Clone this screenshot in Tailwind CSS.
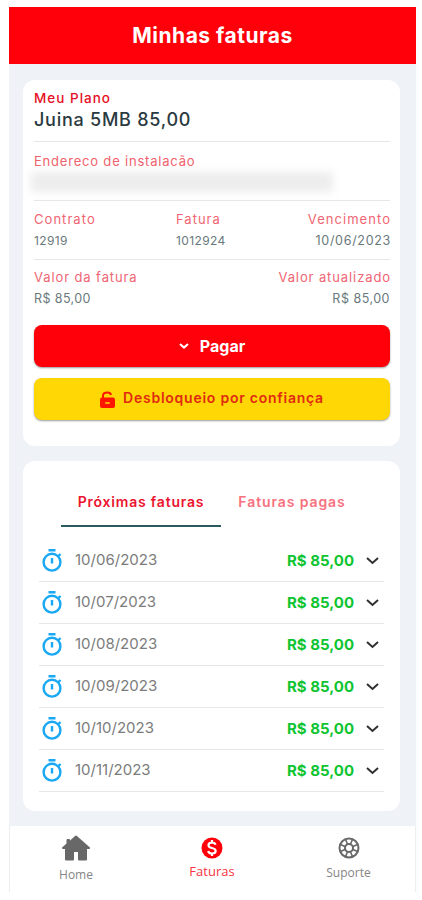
<!DOCTYPE html>
<html lang="pt-BR">
<head>
    <meta charset="UTF-8">
    <meta name="viewport" content="width=device-width, initial-scale=1.0">
    <title>Minhas faturas</title>
    <script src="https://cdn.jsdelivr.net/npm/@tailwindcss/browser@4"></script>
</head>
<body class="bg-white font-['Inter',sans-serif]">
    <div class="ml-[9px] w-[407px] pt-[7px]">
        <header class="h-[57px] bg-[#ff000a] flex items-center justify-center">
            <h1 class="text-[21px] leading-[28px] font-bold text-white tracking-[0.5px]">Minhas faturas</h1>
        </header>

        <main class="h-[762px] bg-[#eff2f7] pt-4 pl-[14px] pr-4">
            <!-- Plano atual -->
            <section class="h-[366px] bg-white rounded-xl pt-2 pl-[11px] pr-[10px]">
                <div class="h-[54px] border-b border-gray-200">
                    <p class="text-[13.5px] leading-5 font-medium text-[#e60f25] tracking-[1px]">Meu Plano</p>
                    <p class="text-[18px] leading-[24px] font-medium text-[#2b3a40] tracking-[0.75px]">Juina 5MB 85,00</p>
                </div>
                <div class="h-[59px] pt-2 border-b border-gray-200">
                    <p class="text-[13px] leading-[22px] text-[#f0606b] tracking-[0.8px]">Endereco de instalacão</p>
                    <div class="w-[302px] h-[20px] -ml-[3px] bg-[#ededed] blur-[4px]"></div>
                </div>
                <div class="h-[59px] pt-2 border-b border-gray-200 flex justify-between text-[13px] leading-[21px] text-[#68787b]">
                    <div class="w-[142px]">
                        <p class="text-[#ef6573] tracking-[1.05px]">Contrato</p>
                        <p class="text-[12px] tracking-[0.4px]">12919</p>
                    </div>
                    <div class="grow">
                        <p class="text-[#ef6573] tracking-[1px]">Fatura</p>
                        <p class="text-[12px] tracking-[0.4px]">1012924</p>
                    </div>
                    <div class="text-right">
                        <p class="text-[#ef6573] tracking-[1.05px] -mr-px">Vencimento</p>
                        <p class="text-[12.5px] tracking-[0.7px] -mr-px">10/06/2023</p>
                    </div>
                </div>
                <div class="h-[65px] pt-[7px] flex justify-between text-[13px] leading-[21px] text-[#68787b]">
                    <div>
                        <p class="text-[#ef6573] tracking-[0.9px]">Valor da fatura</p>
                        <p class="text-[12.5px] tracking-[0.4px]">R$ 85,00</p>
                    </div>
                    <div class="text-right">
                        <p class="text-[#ef6573] tracking-[0.9px] -mr-px">Valor atualizado</p>
                        <p class="text-[12.5px] tracking-[0.5px]">R$ 85,00</p>
                    </div>
                </div>
                <button class="w-full h-[42px] bg-[#ff000a] rounded-lg shadow-[0_1px_2px_rgba(0,0,0,0.4)] flex items-center justify-center text-white">
                    <svg class="w-[10px] h-[6px] mr-[11px]" viewBox="0 0 10 6" fill="none" stroke="currentColor" stroke-width="2"><path d="M1 1l4 3.6L9 1"/></svg>
                    <span class="text-[16px] font-bold">Pagar</span>
                </button>
                <button class="w-full h-[42px] mt-[11px] bg-[#ffd705] rounded-lg shadow-[0_1px_2px_rgba(0,0,0,0.4)] flex items-center justify-center text-[#e02a10]">
                    <svg class="w-[15px] h-[17px] mr-2" viewBox="0 0 15 17" fill="none"><path d="M3 8V4.500Q3 1.500 7.500 1.500Q10.500 1.500 11 4" stroke="#ff1400" stroke-width="2"/><rect y="6.500" width="15" height="10.500" rx="2" fill="#ff1400"/><rect x="5" y="11" width="5" height="2" rx="1" fill="#ffb000"/></svg>
                    <span class="text-[14px] leading-5 pb-[3px] font-semibold tracking-[0.75px]">Desbloqueio por confiança</span>
                </button>
            </section>

            <!-- Lista de faturas -->
            <section class="h-[350px] mt-[15px] bg-white rounded-xl pt-[13px] px-4">
                <div class="flex pl-[22px] text-[14px] leading-[56px] font-semibold">
                    <div class="w-[160px] h-[53px] border-b-2 border-[#285a5e] text-center text-[#ec1430] tracking-[0.8px] whitespace-nowrap">Próximas faturas</div>
                    <div class="w-[142px] text-center text-[#f7727f] tracking-[0.9px] whitespace-nowrap">Faturas pagas</div>
                </div>
                <ul id="faturas" class="mt-[10px]"></ul>
            </section>
        </main>

        <nav class="h-[66px] flex border-x border-[#eeeef2] text-[12px] text-[#858585] font-['Open_Sans',sans-serif]">
            <a class="w-[132px] flex flex-col items-center pt-[9px]">
                <svg class="w-7 h-[26px]" viewBox="0 0 28 26" fill="#686868" stroke="#686868" stroke-width="2" stroke-linejoin="round"><path d="M14 1.500L27 13H24V24.500H17V16H11V24.500H4V13H1L5.500 9V5H7V7.700Z"/></svg>
                <span class="leading-4 mt-[6px]">Home</span>
            </a>
            <a class="w-[140px] flex flex-col items-center pt-[11px] text-[#fa3444]">
                <svg class="w-[22px] h-[22px]" viewBox="0 0 22 22" fill="none"><circle cx="11" cy="11" r="10.500" fill="#ff000a"/><path d="M14.500 7.800Q14 5.700 11 5.700Q7.500 5.700 7.500 8.200Q7.500 10.300 11 11Q14.700 11.800 14.700 14Q14.700 16.500 11 16.500Q7.600 16.500 7.200 14M11 3V5.700M11 16.500V19" stroke="white" stroke-width="2.200"/></svg>
                <span class="text-[13px] leading-4 mt-1">Faturas</span>
            </a>
            <a class="w-[133px] flex flex-col items-center pt-[11px]">
                <svg class="w-[22px] h-[22px]" viewBox="0 0 22 22" fill="none" stroke="#686868"><circle cx="11" cy="11" r="9.500" stroke-width="2"/><circle cx="11" cy="11" r="4" stroke-width="2"/><path d="M9.500 7L7.500 2.500M12.500 7L14.500 2.500M9.500 15L7.500 19.500M12.500 15L14.500 19.500M7 9.500L2.500 7.500M7 12.500L2.500 14.500M15 9.500L19.500 7.500M15 12.500L19.500 14.500" stroke-width="1.600"/></svg>
                <span class="leading-4 mt-[6px]">Suporte</span>
            </a>
        </nav>
    </div>

    <script>
        const datas = ["10/06/2023", "10/07/2023", "10/08/2023", "10/09/2023", "10/10/2023", "10/11/2023"];
        document.getElementById('faturas').innerHTML = datas.map(data => `
            <li class="h-[42px] border-b border-gray-200 flex items-center pl-[3px] pr-[5px]">
                <svg class="w-5 h-[23px]" viewBox="0 0 20 23" fill="none" stroke="#18a8f4" stroke-width="2.400"><circle cx="10" cy="13.200" r="8.400"/><path d="M6.500 1.200H13.500M10 9V14.500M16 7.500L18.500 5"/></svg>
                <span class="ml-[13px] text-[15px] text-[#7c7c7c]">${data}</span>
                <span class="ml-auto pt-[2px] text-[15px] font-bold text-[#0fc431]">R$ 85,00</span>
                <svg class="w-[13px] h-2 ml-[12px]" viewBox="0 0 13 8" fill="none" stroke="#303030" stroke-width="2"><path d="M1 1l5.500 5L12 1"/></svg>
            </li>`).join('');
    </script>
</body>
</html>
